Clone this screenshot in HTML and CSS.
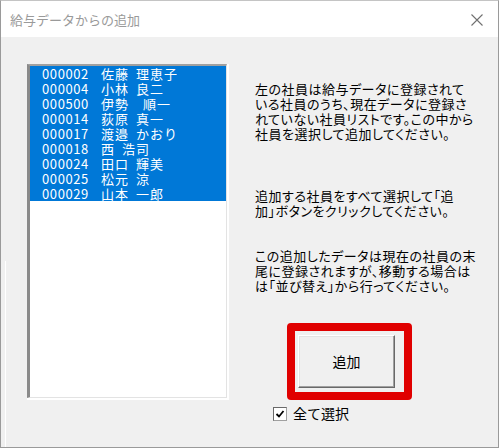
FILE: index.html
```html
<!DOCTYPE html>
<html lang="ja">
<head>
<meta charset="utf-8">
<title>給与データからの追加</title>
<link rel="stylesheet" href="styles.css">
</head>
<body>
<div class="window">
  <div class="titlebar">
    <span class="title">給与データからの追加</span>
    <svg class="close" width="12" height="12" viewBox="0 0 12 12">
      <path d="M0.5 0.5 L11.5 11.5 M11.5 0.5 L0.5 11.5" stroke="#707070" stroke-width="1.1" fill="none"/>
    </svg>
  </div>
  <div class="client">
    <div class="list-outer">
      <div class="list">
        <div class="row"><span class="code">000002</span><span class="name">佐藤 理恵子</span></div>
        <div class="row"><span class="code">000004</span><span class="name">小林 良二</span></div>
        <div class="row"><span class="code">000500</span><span class="name">伊勢　順一</span></div>
        <div class="row"><span class="code">000014</span><span class="name">荻原 真一</span></div>
        <div class="row"><span class="code">000017</span><span class="name">渡邉 かおり</span></div>
        <div class="row"><span class="code">000018</span><span class="name">西 浩司</span></div>
        <div class="row"><span class="code">000024</span><span class="name">田口 輝美</span></div>
        <div class="row"><span class="code">000025</span><span class="name">松元 涼</span></div>
        <div class="row"><span class="code">000029</span><span class="name">山本 一郎</span></div>
      </div>
    </div>
    <div class="side">
      <p class="para p1">左の社員は給与データに登録されて<br>いる社員のうち、現在データに登録さ<br>れていない社員リストです。この中から<br>社員を選択して追加してください。</p>
      <p class="para p2">追加する社員をすべて選択して「追<br>加」ボタンをクリックしてください。</p>
      <p class="para p3">この追加したデータは現在の社員の末<br>尾に登録されますが、移動する場合は<br>は「並び替え」から行ってください。</p>
      <div class="highlight">
        <div class="button">追加</div>
      </div>
      <label class="check-row">
        <span class="checkbox">
          <svg width="10" height="10" viewBox="0 0 10 10">
            <path d="M1.5 5 L4 7.5 L8.5 2" stroke="#000" stroke-width="1.8" fill="none"/>
          </svg>
        </span>
        <span class="check-label">全て選択</span>
      </label>
    </div>
  </div>
</div>
</body>
</html>
```
FILE: styles.css
```css
html, body {
  margin: 0;
  padding: 0;
  background: #f0f0f0;
}

body {
  font-family: "Noto Sans CJK JP", "Noto Sans", sans-serif;
  color: #000;
}

.window {
  position: relative;
  width: 499px;
  height: 448px;
  box-sizing: border-box;
  border-top: 1px solid #c4c4c4;
  border-left: 1px solid #9a9a9a;
  border-right: 1px solid #9a9a9a;
  border-bottom: 1px solid #9a9a9a;
  background: #f0f0f0;
  display: flex;
  flex-direction: column;
}

.window::after {
  content: "";
  position: absolute;
  left: 4px;
  top: 260px;
  bottom: 0;
  width: 1px;
  background: #ffffff;
}

.titlebar {
  height: 36px;
  background: #ffffff;
  display: flex;
  align-items: center;
  justify-content: space-between;
  padding: 0 15px 0 9px;
  flex: none;
}

.title {
  font-size: 13px;
  color: #9a9a9a;
  line-height: 15px;
}

.close {
  display: block;
  margin-top: 1px;
}

.client {
  flex: 1;
  display: flex;
  align-items: flex-start;
}

.list-outer {
  margin: 27px 0 0 26px;
  border-right: 2px solid #ffffff;
  border-bottom: 2px solid #ffffff;
}

.list {
  width: 196px;
  height: 331px;
  background: #ffffff;
  border-top: 2px solid #a0a0a0;
  border-left: 3px solid #8a8a8a;
  border-right: 1px solid #e3e3e3;
  border-bottom: 1px solid #e3e3e3;
}

.row {
  display: flex;
  height: 15px;
  line-height: 15px;
  background: #0078d7;
  color: #ffffff;
  font-size: 13px;
  padding-left: 12px;
  white-space: pre;
}

.code {
  width: 59px;
  flex: none;
  letter-spacing: 0.6px;
}

.name {
  letter-spacing: 1px;
  word-spacing: 3px;
}

.side {
  margin-left: 26px;
  padding-top: 44px;
  display: flex;
  flex-direction: column;
  align-items: flex-start;
}

.para {
  margin: 0;
  font-size: 13px;
  line-height: 15px;
  white-space: nowrap;
  font-feature-settings: "palt";
  letter-spacing: 0.5px;
}

.p2 {
  margin-top: 47px;
}

.p3 {
  margin-top: 30px;
}

.highlight {
  margin: 30px 0 0 32px;
  width: 103px;
  border: 8px solid #e00000;
  border-radius: 4px;
  padding: 4px 3px;
  background: #f0f0f0;
}

.button {
  box-sizing: border-box;
  width: 97px;
  height: 53px;
  background: #f0f0f0;
  border-top: 1px solid #ffffff;
  border-left: 1px solid #ffffff;
  border-right: 1px solid #696969;
  border-bottom: 1px solid #696969;
  box-shadow: inset -1px -1px 0 #a0a0a0, inset 1px 1px 0 #e3e3e3;
  display: flex;
  align-items: center;
  justify-content: center;
  font-size: 14px;
  line-height: 15px;
}

.check-row {
  margin: 6px 0 0 18px;
  display: flex;
  align-items: center;
  gap: 6px;
}

.checkbox {
  box-sizing: border-box;
  width: 14px;
  height: 14px;
  background: #ffffff;
  border-top: 1px solid #696969;
  border-left: 1px solid #696969;
  border-right: 1px solid #a0a0a0;
  border-bottom: 1px solid #a0a0a0;
  display: flex;
  align-items: center;
  justify-content: center;
}

.checkbox svg {
  display: block;
}

.check-label {
  font-size: 14px;
  line-height: 15px;
}
```
